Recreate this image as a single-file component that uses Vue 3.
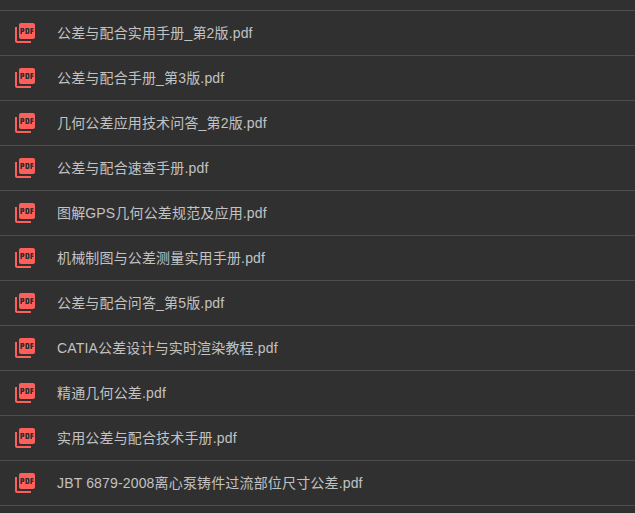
<template>
  <div class="file-list">
    <a v-for="file in files" :key="file" class="file-row">
      <svg class="file-icon" viewBox="0 0 24 24" width="24" height="24" aria-hidden="true">
        <path
          fill="#ff5f5a"
          d="M20 2H8c-1.1 0-2 .9-2 2v12c0 1.1.9 2 2 2h12c1.1 0 2-.9 2-2V4c0-1.100-.9-2-2-2zm-8.500 7.500c0 .83-.67 1.500-1.500 1.500H9v2H7.500V7H10c.83 0 1.500.67 1.500 1.500v1zm5 2c0 .83-.67 1.500-1.500 1.500h-2.500V7H15c.83 0 1.500.67 1.500 1.500v3zm4-3H19v1h1.500V11H19v2h-1.500V7h3v1.500zM9 9.500h1v-1H9v1zM4 6H2v14c0 1.100.9 2 2 2h14v-2H4V6zm10 5.500h1v-3h-1v3z"
        />
      </svg>
      <span class="file-name">{{ file }}</span>
    </a>
  </div>
</template>

<script setup>
const files = [
  '公差与配合实用手册_第2版.pdf',
  '公差与配合手册_第3版.pdf',
  '几何公差应用技术问答_第2版.pdf',
  '公差与配合速查手册.pdf',
  '图解GPS几何公差规范及应用.pdf',
  '机械制图与公差测量实用手册.pdf',
  '公差与配合问答_第5版.pdf',
  'CATIA公差设计与实时渲染教程.pdf',
  '精通几何公差.pdf',
  '实用公差与配合技术手册.pdf',
  'JBT 6879-2008离心泵铸件过流部位尺寸公差.pdf'
]
</script>

<style>
html,
body {
  margin: 0;
  background: #303030;
  overflow: hidden;
}
</style>

<style scoped>
.file-list {
  height: 513px;
  padding-top: 10px;
  box-sizing: border-box;
  background: #303030;
  font-family: "Liberation Sans", Arial, "Noto Sans CJK SC", sans-serif;
}

.file-row {
  display: flex;
  align-items: center;
  gap: 20px;
  height: 45px;
  box-sizing: border-box;
  padding-left: 13px;
  border-top: 1px solid #4d4d4d;
  color: #c2c2c2;
  font-size: 14px;
}

.file-row:last-child {
  height: 46px;
  border-bottom: 1px solid #4d4d4d;
}

.file-icon {
  flex: none;
}

.file-name {
  padding-bottom: 2px;
  letter-spacing: 0.16px;
}
</style>
